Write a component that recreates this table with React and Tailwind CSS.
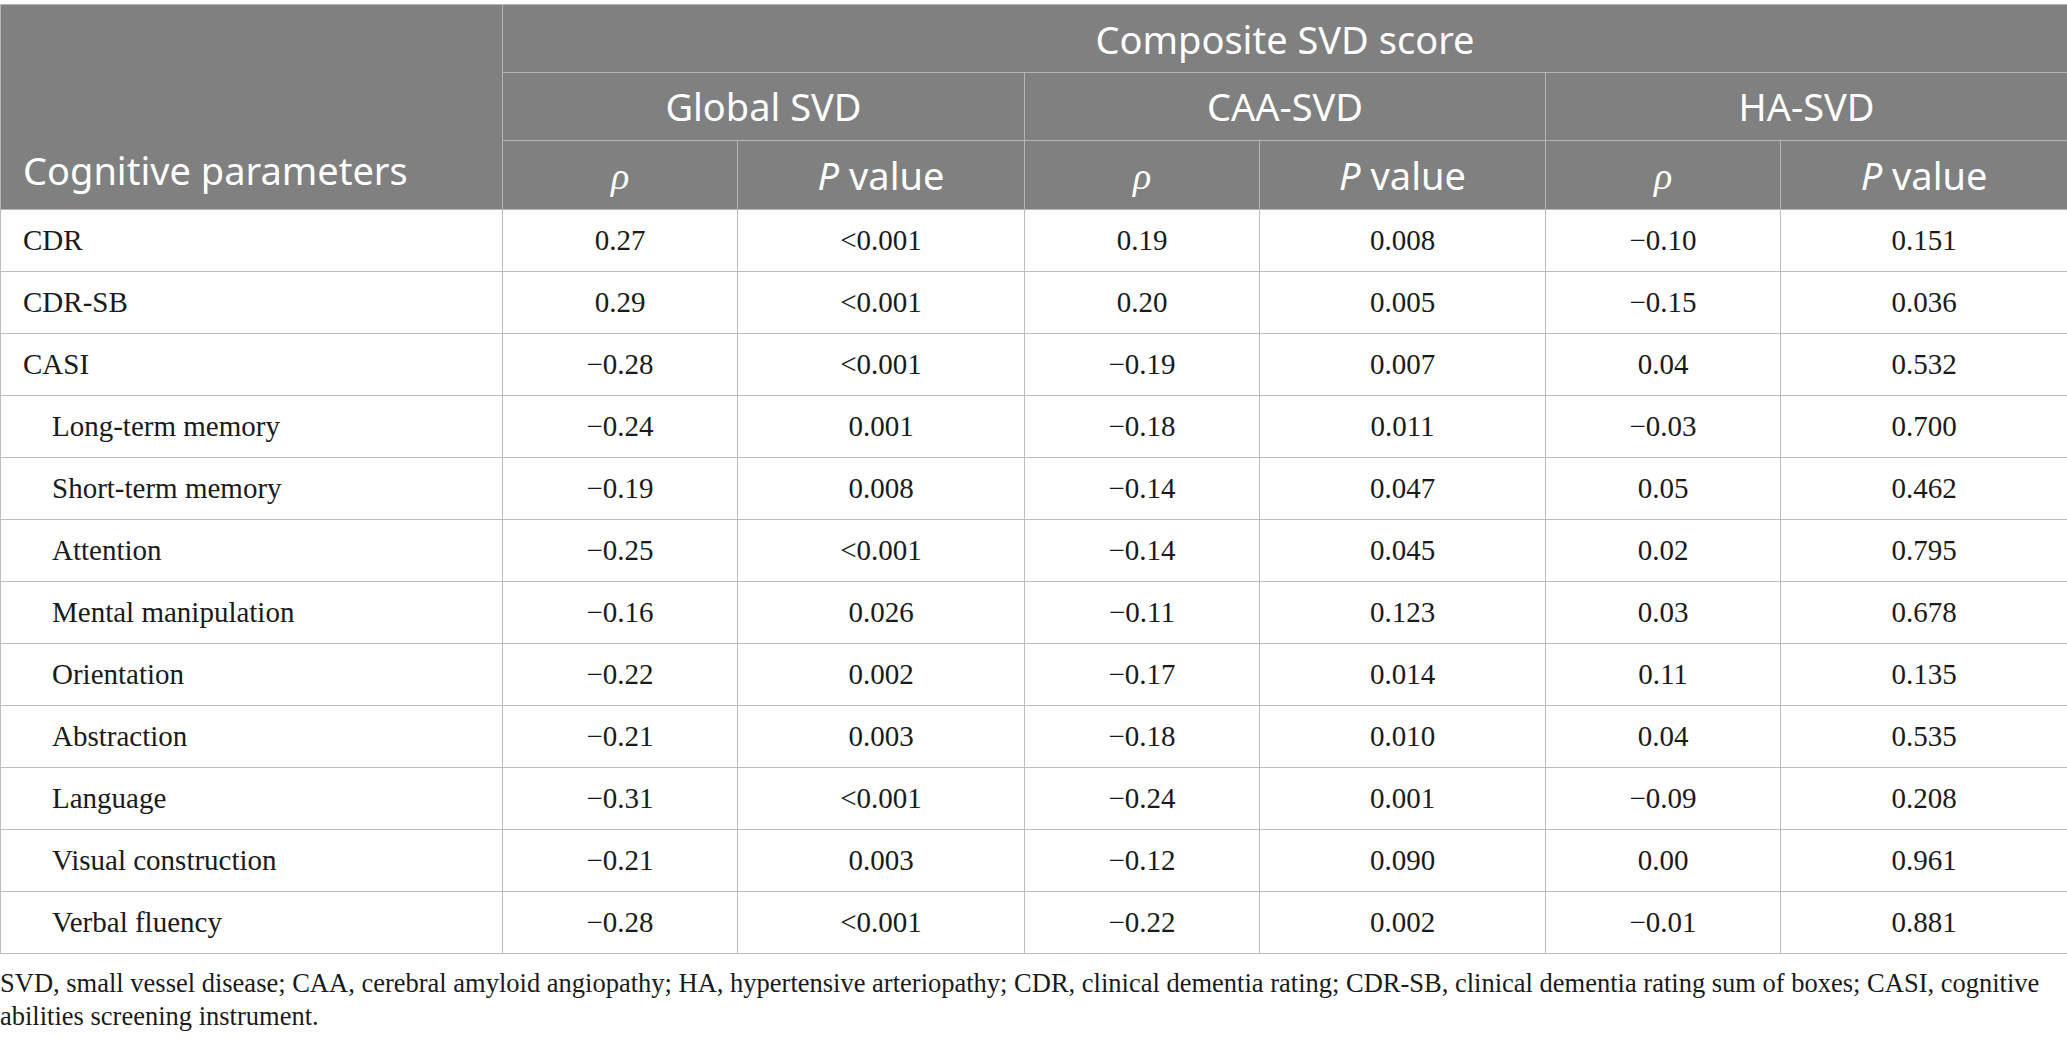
import React from 'react';

const rows = [
  { label: 'CDR', indent: false, v: ['0.27', '<0.001', '0.19', '0.008', '\u22120.10', '0.151'] },
  { label: 'CDR-SB', indent: false, v: ['0.29', '<0.001', '0.20', '0.005', '\u22120.15', '0.036'] },
  { label: 'CASI', indent: false, v: ['\u22120.28', '<0.001', '\u22120.19', '0.007', '0.04', '0.532'] },
  { label: 'Long-term memory', indent: true, v: ['\u22120.24', '0.001', '\u22120.18', '0.011', '\u22120.03', '0.700'] },
  { label: 'Short-term memory', indent: true, v: ['\u22120.19', '0.008', '\u22120.14', '0.047', '0.05', '0.462'] },
  { label: 'Attention', indent: true, v: ['\u22120.25', '<0.001', '\u22120.14', '0.045', '0.02', '0.795'] },
  { label: 'Mental manipulation', indent: true, v: ['\u22120.16', '0.026', '\u22120.11', '0.123', '0.03', '0.678'] },
  { label: 'Orientation', indent: true, v: ['\u22120.22', '0.002', '\u22120.17', '0.014', '0.11', '0.135'] },
  { label: 'Abstraction', indent: true, v: ['\u22120.21', '0.003', '\u22120.18', '0.010', '0.04', '0.535'] },
  { label: 'Language', indent: true, v: ['\u22120.31', '<0.001', '\u22120.24', '0.001', '\u22120.09', '0.208'] },
  { label: 'Visual construction', indent: true, v: ['\u22120.21', '0.003', '\u22120.12', '0.090', '0.00', '0.961'] },
  { label: 'Verbal fluency', indent: true, v: ['\u22120.28', '<0.001', '\u22120.22', '0.002', '\u22120.01', '0.881'] },
];

const groups = ['Global SVD', 'CAA-SVD', 'HA-SVD'];

const Rho = () => (
  <span className="italic text-[38px]" style={{ fontFamily: '"Liberation Serif", serif' }}>ρ</span>
);

const PValue = () => (
  <span>
    <span className="italic">P</span> value
  </span>
);

export default function App() {
  return (
    <div className="w-[2067px] bg-white pt-[4px]">
      <table
        className="w-[2067px] table-fixed border-collapse"
        style={{ fontFamily: '"Liberation Serif", serif' }}
      >
        <colgroup>
          <col className="w-[502px]" />
          <col className="w-[235px]" />
          <col className="w-[287px]" />
          <col className="w-[235px]" />
          <col className="w-[286px]" />
          <col className="w-[235px]" />
          <col className="w-[287px]" />
        </colgroup>
        {/* header block */}
        <thead className="bg-[#808080] text-white text-[38px]" style={{ fontFamily: '"Noto Sans", sans-serif' }}>
          <tr className="h-[68px]">
            <th rowSpan={3} className="border border-[#b4b4b4] align-bottom text-left font-normal pl-[22px] pb-[10px]">
              Cognitive parameters
            </th>
            <th colSpan={6} className="border border-[#b4b4b4] font-normal text-center pt-[2px]">
              Composite SVD score
            </th>
          </tr>
          <tr className="h-[68px]">
            {groups.map((g) => (
              <th key={g} colSpan={2} className="border border-[#b4b4b4] font-normal text-center">
                {g}
              </th>
            ))}
          </tr>
          <tr className="h-[69px]">
            {groups.map((g) => (
              <React.Fragment key={g}>
                <th className="border border-[#b4b4b4] font-normal text-center"><Rho /></th>
                <th className="border border-[#b4b4b4] font-normal text-center"><PValue /></th>
              </React.Fragment>
            ))}
          </tr>
        </thead>
        <tbody className="text-[29px] text-[#1a1a1a]">
          {rows.map((r) => (
            <tr key={r.label} className="h-[62px]">
              <td className={`border border-[#bdbdbd] text-left ${r.indent ? 'pl-[51px]' : 'pl-[22px]'}`}>
                {r.label}
              </td>
              {r.v.map((val, i) => (
                <td key={i} className="border border-[#bdbdbd] text-center">
                  {val}
                </td>
              ))}
            </tr>
          ))}
        </tbody>
      </table>
      <p
        className="pt-[13px] text-[26.5px] leading-[33px] text-[#1a1a1a]"
        style={{ fontFamily: '"Liberation Serif", serif' }}
      >
        SVD, small vessel disease; CAA, cerebral amyloid angiopathy; HA, hypertensive arteriopathy; CDR, clinical dementia rating; CDR-SB, clinical dementia rating sum of boxes; CASI, cognitive abilities screening instrument.
      </p>
    </div>
  );
}
